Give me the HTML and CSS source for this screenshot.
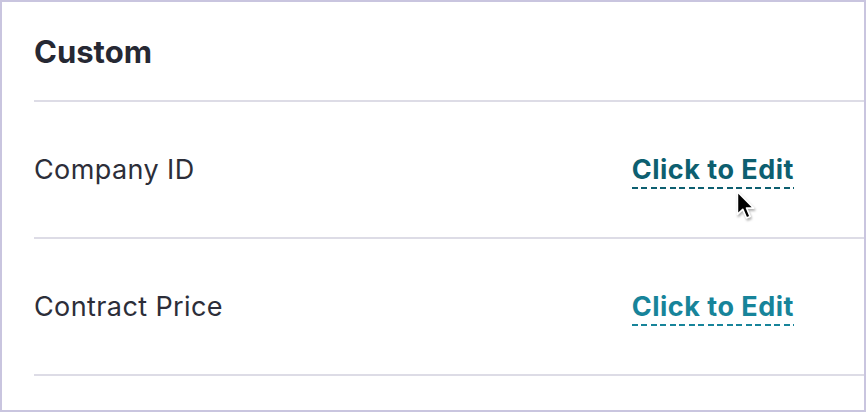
FILE: index.html
```html
<!DOCTYPE html>
<html lang="en">

<head>
    <meta charset="UTF-8">
    <meta name="viewport" content="width=device-width, initial-scale=1.0">
    <title>Custom fields</title>
    <link rel="stylesheet" href="styles.css">
</head>

<body>
    <div class="panel">
        <h3 class="panel-title">Custom</h3>
        <ul class="fields">
            <li class="field">
                <span class="field-label">Company ID</span>
                <span class="field-value">
                    <a class="edit-link hover" href="#">Click to Edit</a>
                    <!-- mouse pointer -->
                    <svg class="cursor" width="24" height="34" viewBox="0 0 20 28">
                        <path d="M2 2 L2 21 L6.5 16.8 L9.6 24 L12.6 22.7 L9.6 15.7 L15.6 15.7 Z" fill="#000" stroke="#fff" stroke-width="1.4" stroke-linejoin="round" />
                    </svg>
                </span>
            </li>
            <li class="field">
                <span class="field-label">Contract Price</span>
                <span class="field-value">
                    <a class="edit-link" href="#">Click to Edit</a>
                </span>
            </li>
        </ul>
    </div>
</body>

</html>
```

FILE: styles.css
```css
* {
    margin: 0;
    padding: 0;
    box-sizing: border-box;
}

body {
    width: 866px;
    height: 412px;
    font-family: Inter, "Liberation Sans", sans-serif;
    color: #2c2e39;
    background: #fff;
}

.panel {
    height: 412px;
    border: 2px solid #c9c5df;
    padding-left: 32px;
}

.panel-title {
    height: 100px;
    display: flex;
    align-items: center;
    font-size: 31px;
    font-weight: 700;
    color: #262833;
    border-bottom: 2px solid #dddce6;
}

.fields {
    list-style: none;
}

.field {
    height: 137px;
    display: flex;
    align-items: center;
    justify-content: space-between;
    padding-right: 70px;
    border-bottom: 2px solid #dddce6;
}

.field-label {
    font-size: 27px;
    letter-spacing: 0.4px;
}

.field-value {
    position: relative;
}

.edit-link {
    font-size: 27px;
    font-weight: 700;
    letter-spacing: 0.5px;
    color: #17849a;
    text-decoration: none;
    padding-bottom: 3px;
    background-image: repeating-linear-gradient(to right, currentColor 0 6px, transparent 6px 9.5px);
    background-size: 100% 2px;
    background-repeat: no-repeat;
    background-position: 0 100%;
}

.edit-link.hover {
    color: #0d5f70;
}

.cursor {
    position: absolute;
    left: 103px;
    top: 36px;
    filter: drop-shadow(1px 2px 1px rgba(0, 0, 0, 0.3));
}
```
